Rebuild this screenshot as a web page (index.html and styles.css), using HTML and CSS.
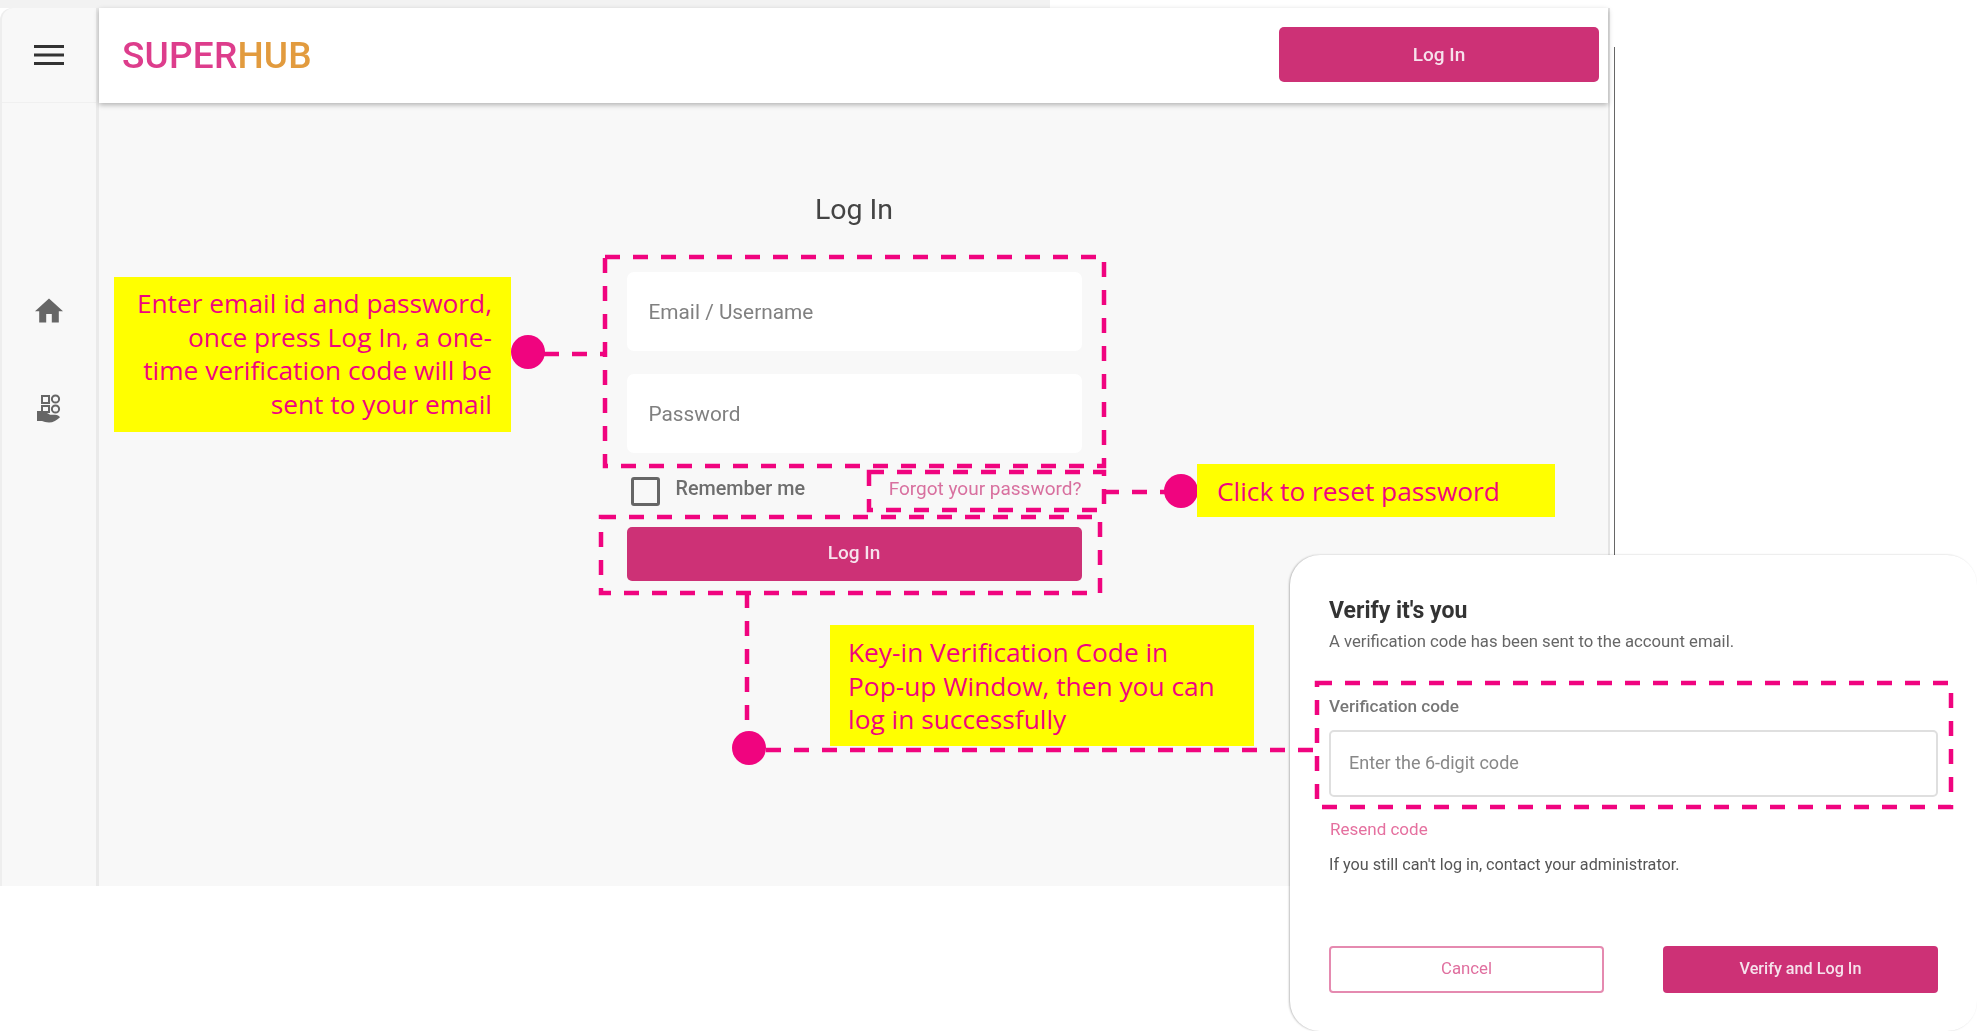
FILE: index.html
```html
<!DOCTYPE html>
<html lang="en">
<head>
<meta charset="utf-8">
<title>Superhub Log In</title>
<link rel="stylesheet" href="styles.css">
</head>
<body>
<div class="stage">
  <div class="band"></div>
  <div class="app">
    <aside class="sidebar">
      <div class="side-top">
        <svg class="menu-icon" viewBox="0 0 30 20"><path d="M0 1.5h30M0 10h30M0 18.5h30"/></svg>
      </div>
      <nav class="side-nav">
        <svg class="home-icon" viewBox="2 3 20 17"><path d="M10 20v-6h4v6h5v-8h3L12 3 2 12h3v8z"/></svg>
        <svg class="svc-icon" viewBox="0 0 24 29">
          <path class="fill" d="M0 17h6v1.5c3 0 5 .8 7 2.2h5c2.500 0 4 1 5 2.500-3 3-7 5.300-11 5.300-3 0-5-1-7-1.500H0z"/>
          <rect class="ln" x="5" y="2" width="7" height="7"/>
          <rect class="ln" x="5" y="12" width="7" height="6"/>
          <circle class="ln" cx="18.500" cy="5" r="3.600"/>
          <circle class="ln" cx="18.500" cy="15" r="3.600"/>
        </svg>
      </nav>
    </aside>
    <div class="main">
      <header class="topbar">
        <div class="logo"><span class="logo-a">SUPER</span><span class="logo-b">HUB</span></div>
        <button class="btn btn-top">Log In</button>
      </header>
      <section class="content">
        <h1 class="title">Log In</h1>
        <div class="form">
          <div class="field">Email / Username</div>
          <div class="field">Password</div>
          <div class="options">
            <label class="remember"><span class="check"></span><span>Remember me</span></label>
            <a class="forgot">Forgot your password?</a>
          </div>
          <button class="btn btn-login">Log In</button>
        </div>
      </section>
    </div>
  </div>
  <div class="edge-line"></div>

  <div class="modal">
    <div class="modal-body">
      <h2 class="modal-title">Verify it's you</h2>
      <p class="modal-sub">A verification code has been sent to the account email.</p>
      <div class="code-label">Verification code</div>
      <div class="code-input">Enter the 6-digit code</div>
      <a class="resend">Resend code</a>
      <p class="contact">If you still can't log in, contact your administrator.</p>
      <div class="modal-actions">
        <button class="btn-outline">Cancel</button>
        <button class="btn btn-verify">Verify and Log In</button>
      </div>
    </div>
  </div>

  <svg class="overlay" width="1977" height="1031" viewBox="0 0 1977 1031">
    <g class="dash">
      <rect x="605" y="257" width="499" height="209"/>
      <rect x="869" y="472" width="235" height="38"/>
      <rect x="601" y="517" width="499" height="76"/>
      <rect x="1317" y="683" width="634" height="124"/>
      <path d="M544 354H605"/>
      <path d="M1104 492H1165"/>
      <path d="M747 593V735"/>
      <path d="M766 750H1317"/>
    </g>
    <circle class="dot" cx="528" cy="352" r="17"/>
    <circle class="dot" cx="1181" cy="491" r="17"/>
    <circle class="dot" cx="749" cy="748" r="17"/>
  </svg>

  <div class="note note-a">Enter email id and password,<br>once press Log In, a one-<br>time verification code will be<br>sent to your email</div>
  <div class="note note-b">Click to reset password</div>
  <div class="note note-c">Key-in Verification Code in<br>Pop-up Window, then you can<br>log in successfully</div>
</div>
</body>
</html>
```

FILE: styles.css
```css
* { box-sizing: border-box; }
html, body { margin: 0; padding: 0; background: #fff; }
body { font-family: Roboto, "Liberation Sans", sans-serif; overflow: hidden; }

.stage { position: relative; width: 1977px; height: 1031px; overflow: hidden; padding: 8px 0 0 2px; }
.band { position: absolute; left: 0; top: 0; width: 1050px; height: 8px; background: #f2f2f2; }

.app { display: flex; width: 1608px; height: 878px; background: #f8f8f8; filter: blur(.6px); border-top-left-radius: 12px; box-shadow: -2px 0 0 #eeeeee; }

.sidebar { flex: 0 0 97px; display: flex; flex-direction: column; border-right: 3px solid #eaeaea; border-top-left-radius: 12px; }
.side-top { height: 95px; display: flex; align-items: center; justify-content: center; border-bottom: 1px solid #f0f0f0; }
.menu-icon { width: 30px; height: 20px; }
.menu-icon path { stroke: #333; stroke-width: 3; fill: none; }
.side-nav { display: flex; flex-direction: column; align-items: center; gap: 71px; padding: 195px 0 0 0; }
.home-icon { width: 28px; height: 25px; fill: #666; display: block; }
.svc-icon { width: 24px; height: 29px; display: block; }
.svc-icon .fill { fill: #666; }
.svc-icon .ln { fill: none; stroke: #666; stroke-width: 2; }

.main { flex: 1; display: flex; flex-direction: column; border-right: 2px solid #e4e4e4; }
.topbar { height: 95px; background: #fff; display: flex; align-items: center; justify-content: space-between; padding: 0 9px 0 23px; box-shadow: 0 2px 5px rgba(0,0,0,.28); position: relative; }
.logo { font-family: Roboto, sans-serif; font-size: 37px; font-weight: 500; line-height: 1; letter-spacing: .2px; }
.logo-a { color: #dd3d8c; }
.logo-b { color: #e29b3e; }

.btn { border: 0; border-radius: 5px; background: #cd3176; color: #f6e2ec; font-family: Roboto, sans-serif; font-weight: 500; padding: 0; display: block; }
.btn-top { width: 320px; height: 55px; font-size: 19px; margin-bottom: 3px; }

.content { flex: 1; display: flex; flex-direction: column; align-items: center; padding: 87px 0 0 1px; }
.title { margin: 0 0 42px; font-size: 28.500px; line-height: 40px; font-weight: 400; color: #444; }
.form { width: 455px; display: flex; flex-direction: column; }
.field { height: 79px; background: #fff; border-radius: 7px; display: flex; align-items: center; padding-left: 22px; font-size: 20.800px; color: #808080; margin-bottom: 23px; }
.options { display: flex; align-items: center; justify-content: space-between; height: 29px; margin: 1px 0 21px; padding-left: 4px; font-size: 19px; }
.remember { display: flex; align-items: center; gap: 16px; font-weight: 500; color: #6e6e6e; font-size: 19.800px; }
.remember span:last-child { margin-top: -6px; }
.check { width: 29px; height: 29px; border: 3px solid #666; border-radius: 3px; }
.forgot { color: #d8709f; margin-top: -6px; }
.btn-login { width: 455px; height: 54px; font-size: 19px; padding-bottom: 3px; }

.edge-line { position: absolute; left: 1614px; top: 47px; width: 1px; height: 510px; background: #666; }

.modal { position: absolute; left: 1290px; top: 555px; width: 687px; height: 476px; background: #fff; border-radius: 30px; box-shadow: -1px 0 2px rgba(0,0,0,.25); }
.modal-body { padding: 41px 39px 0 39px; filter: blur(.5px); display: flex; flex-direction: column; align-items: flex-start; height: 100%; }
.modal-title { margin: 0; font-size: 23px; line-height: 30px; font-weight: 700; color: #333; }
.modal-sub { margin: 6px 0 0; font-size: 16.700px; line-height: 20px; color: #666; }
.code-label { margin-top: 44px; font-size: 17.200px; line-height: 20px; font-weight: 500; color: #777; }
.code-input { width: 609px; height: 67px; margin-top: 14px; border: 2px solid #dfdfdf; border-radius: 5px; display: flex; align-items: center; padding: 0 0 2px 18px; font-size: 18px; color: #888; }
.resend { margin: 22px 0 0 1px; font-size: 17px; line-height: 20px; color: #e5709f; }
.contact { margin: 16px 0 0; font-size: 16.200px; line-height: 20px; color: #555; }
.modal-actions { width: 609px; display: flex; justify-content: space-between; margin-top: 71px; }
.btn-outline { width: 275px; height: 47px; background: #fff; border: 2px solid #e58ab0; border-radius: 4px; color: #e06f9f; font-family: Roboto, sans-serif; font-size: 16.800px; padding: 0 0 3px; }
.btn-verify { width: 275px; height: 47px; font-size: 16.200px; border-radius: 4px; padding-bottom: 3px; }

.overlay { position: absolute; left: 0; top: 0; pointer-events: none; }
.dash { fill: none; stroke: #f0047f; stroke-width: 4.500; stroke-dasharray: 15 13; }
.dot { fill: #f0047f; }

.note { position: absolute; background: #ffff00; color: #f0047f; font-family: "Open Sans", "Noto Sans", sans-serif; font-size: 26.300px; line-height: 33.500px; white-space: nowrap; }
.note-a { left: 114px; top: 277px; width: 397px; height: 155px; padding: 10px 19px 0 0; text-align: right; }
.note-b { left: 1197px; top: 464px; width: 358px; height: 53px; padding: 11px 0 0 20px; }
.note-c { left: 830px; top: 625px; width: 424px; height: 121px; padding: 11px 0 0 18px; }
```
